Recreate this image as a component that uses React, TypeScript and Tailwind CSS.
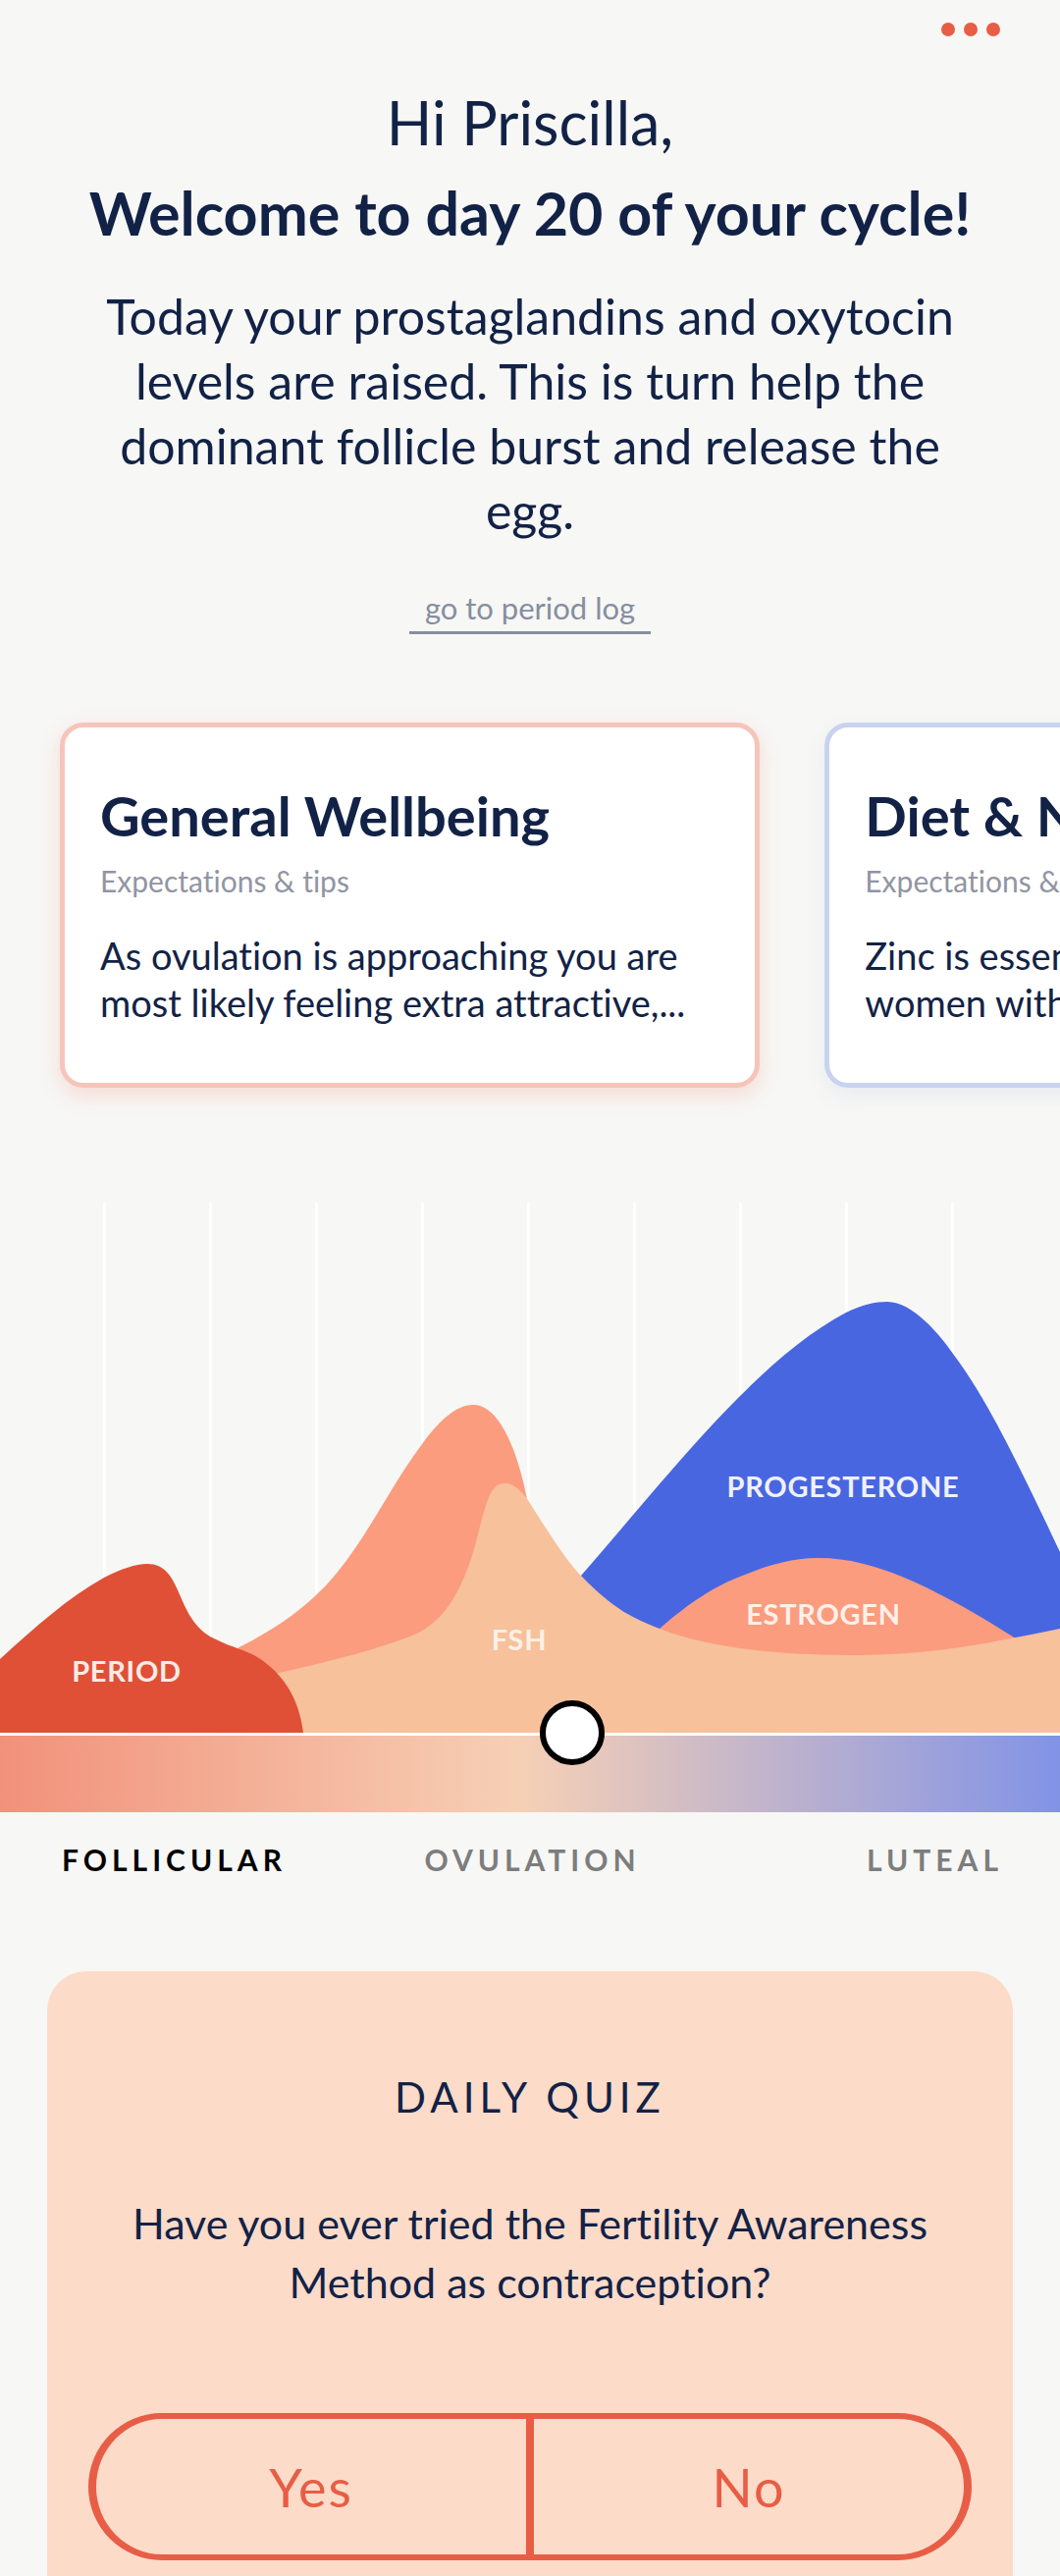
import { useState } from "react";

const cards = [
  {
    title: "General Wellbeing",
    text: "As ovulation is approaching you are most likely feeling extra attractive,...",
    style: "border-[#f6c5ba] shadow-[0_8px_20px_rgba(240,140,115,0.25)]",
  },
  {
    title: "Diet & Nutrition",
    text: "Zinc is essential for hormones so women with low levels can try seeds,...",
    style: "border-[#c8d3f0] shadow-[0_8px_20px_rgba(120,140,200,0.10)]",
  },
];

const gridLines = [1, 2, 3, 4, 5, 6, 7, 8, 9];

function HormoneChart() {
  return (
    <svg viewBox="0 0 1080 540" className="block h-auto w-full" role="img" aria-label="Hormone levels over the cycle">
      {gridLines.map((n) => (
        <rect key={n} x={n * 108 - 3} y="0" width="3" height="540" fill="#ffffff" />
      ))}
      <path fill="#4966e1" d="M592 380 C646 318 700 251 754 197 C790 161 826 131 862 112 C878 104 892 101 904 101 C930 101 958 135 971 154 C1008 203 1042 276 1080 356 V540 H592 Z" />
      <path fill="#fb9c7e" d="M672 434 C704 406 730 390 754 381 C780 370 806 362 833 362 C865 362 892 370 919 381 C960 398 1000 422 1035 444 V500 H672 Z" />
      <path fill="#fb9c7e" d="M230 460 C262 444 292 428 322 400 C367 358 393 295 430 246 C446 224 464 206 482 206 C511 206 529 260 537 302 L580 540 H230 Z" />
      <path fill="#f6c19b" d="M280 480 C340 467 390 453 420 441 C455 427 474 390 487 338 C495 306 500 286 514 286 C526 286 536 299 541 308 C565 346 580 368 592 380 C627 416 645 423 672 434 C720 453 790 461 864 461 C950 461 1000 450 1080 434 V540 H280 Z" />
      <path fill="#df5037" d="M0 465 C36 432 70 402 106 382 C124 373 138 368 150 368 C186 368 178 420 214 442 C240 456 252 454 272 470 C295 488 306 514 309 540 H0 Z" />
      <g className="text-[29px] font-bold tracking-wide" textAnchor="middle">
        <text x="129" y="488" fill="#fdebe6">PERIOD</text>
        <text x="529" y="456" fill="#fdf0e6">FSH</text>
        <text x="859" y="300" fill="#eff1fd">PROGESTERONE</text>
        <text x="839" y="430" fill="#fff0ea">ESTROGEN</text>
      </g>
    </svg>
  );
}

export default function App() {
  const [day, setDay] = useState(20);
  const [answer, setAnswer] = useState("");

  return (
    <main className="overflow-hidden bg-[#f7f7f5] font-['Lato',sans-serif] text-[#122246] [font-variant-ligatures:no-common-ligatures]">
      <header className="flex h-[60px] justify-end px-[61px]">
        <button type="button" aria-label="Menu" className="flex items-center gap-[9px]">
          <span className="size-[14px] rounded-full bg-[#e85d45]" />
          <span className="size-[14px] rounded-full bg-[#e85d45]" />
          <span className="size-[14px] rounded-full bg-[#e85d45]" />
        </button>
      </header>

      <section className="flex flex-col items-center px-20 pt-[23px] text-center">
        <h1 className="text-[61px] leading-[84px]">Hi Priscilla,</h1>
        <p className="mt-2 text-[61px] leading-[84px] font-bold whitespace-nowrap">
          Welcome to day {day} of your cycle!
        </p>
        <p className="mt-[30px] px-4 text-[50px] leading-[66px]">
          Today your prostaglandins and oxytocin levels are raised. This is turn help the dominant follicle burst and
          release the egg.
        </p>
        <a href="#period-log" className="mt-[46px] border-b-[3px] border-[#868e9f] px-4 pb-1 text-[31px] leading-[40px] text-[#868e9f]">
          go to period log
        </a>
      </section>

      <section aria-label="Tips" className="flex gap-[66px] pt-[90px] pl-[61px]">
        {cards.map((card) => (
          <article
            key={card.title}
            className={`w-[70%] shrink-0 rounded-[24px] border-[5px] bg-white px-9 pt-[54px] pb-[58px] ${card.style}`}
          >
            <h2 className="text-[56px] leading-[72px] font-bold">{card.title}</h2>
            <p className="mt-[10px] text-[30px] leading-[40px] text-[#9195a3]">Expectations &amp; tips</p>
            <p className="mt-[32px] line-clamp-2 text-[38px] leading-[48px]">{card.text}</p>
          </article>
        ))}
      </section>

      <section aria-label="Cycle" className="pt-[117px]">
        <HormoneChart />
        <div className="relative border-t-[3px] border-white">
          <div className="h-[78px] bg-[linear-gradient(90deg,#f2917b_0%,#f6d0b5_49%,#8293e6_100%)]" />
          <input
            type="range"
            aria-label="Cycle day"
            min={1}
            max={36}
            value={day}
            onChange={(e) => setDay(Number(e.target.value))}
            className="absolute inset-x-0 -top-9 h-[66px] w-full appearance-none bg-transparent [&::-webkit-slider-thumb]:size-[66px] [&::-webkit-slider-thumb]:appearance-none [&::-webkit-slider-thumb]:rounded-full [&::-webkit-slider-thumb]:border-[6px] [&::-webkit-slider-thumb]:border-black [&::-webkit-slider-thumb]:bg-white"
          />
        </div>
        <div className="grid grid-cols-3 pt-[28px] pr-[58px] pl-[63px] text-[30px] leading-[40px] font-bold tracking-[5px] text-[#7d7d7d]">
          <span className="text-black">FOLLICULAR</span>
          <span className="text-center">OVULATION</span>
          <span className="text-right">LUTEAL</span>
        </div>
      </section>

      <section className="mx-12 mt-[94px] rounded-t-[40px] bg-[#fcdbc9] px-[42px] pt-[100px] pb-4 text-center">
        <h2 className="text-[42px] leading-[56px] tracking-[5px]">DAILY QUIZ</h2>
        <p className="px-5 pt-[71px] text-[43px] leading-[60px]">
          Have you ever tried the Fertility Awareness Method as contraception?
        </p>
        <div className="mt-[103px] grid h-[150px] grid-cols-[1fr_8px_1fr] rounded-full border-x-[8px] border-y-[6px] border-[#e85d45] text-[54px] tracking-[2px] text-[#e85d45]">
          <button type="button" aria-pressed={answer === "Yes"} onClick={() => setAnswer("Yes")}>
            Yes
          </button>
          <span className="bg-[#e85d45]" />
          <button type="button" aria-pressed={answer === "No"} onClick={() => setAnswer("No")}>
            No
          </button>
        </div>
      </section>
    </main>
  );
}
